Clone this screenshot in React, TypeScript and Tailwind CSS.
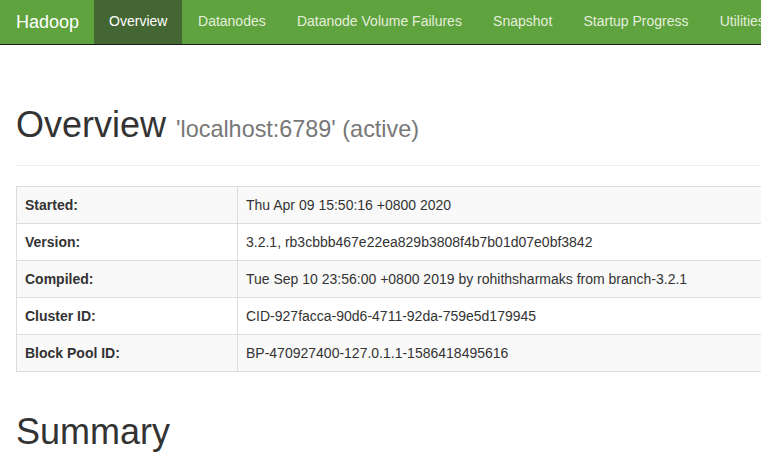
import React from "react";

const navItems = [
  "Overview",
  "Datanodes",
  "Datanode Volume Failures",
  "Snapshot",
  "Startup Progress",
  "Utilities",
];

const rows: [string, string][] = [
  ["Started:", "Thu Apr 09 15:50:16 +0800 2020"],
  ["Version:", "3.2.1, rb3cbbb467e22ea829b3808f4b7b01d07e0bf3842"],
  ["Compiled:", "Tue Sep 10 23:56:00 +0800 2019 by rohithsharmaks from branch-3.2.1"],
  ["Cluster ID:", "CID-927facca-90d6-4711-92da-759e5d179945"],
  ["Block Pool ID:", "BP-470927400-127.0.1.1-1586418495616"],
];

export default function App() {
  return (
    <div
      className="w-[761px] h-[453px] overflow-hidden bg-white text-[#333] text-[14px] leading-[20px]"
      style={{ fontFamily: '"Liberation Sans", Arial, Helvetica, sans-serif' }}
    >
      <nav className="h-[45px] bg-[#5fa33e] border-b border-[#1a1a1a] flex items-stretch whitespace-nowrap w-[1200px]">
        <div className="pl-[16px] pr-[15px] pb-[1px] flex items-center text-[18px] text-white">
          Hadoop
        </div>
        {navItems.map((item, i) => (
          <div
            key={item}
            className={
              i === 0
                ? "px-[15px] pb-[2px] flex items-center bg-[#446633] text-white"
                : "px-[15.6px] pb-[2px] flex items-center text-[#e4eedc]"
            }
          >
            {item}
          </div>
        ))}
      </nav>

      <div className="pl-[16px] w-[1200px]">
        <div className="mt-[60px] pb-[10px] border-b border-[#eee]">
          <h1 className="text-[36px] leading-[39.6px] mb-[10px] font-normal whitespace-nowrap">
            Overview{" "}
            <span className="text-[23.4px] leading-none text-[#777]">'localhost:6789' (active)</span>
          </h1>
        </div>

        <table className="mt-[20px] w-[1140px] border-collapse border border-[#ddd]">
          <tbody>
            {rows.map(([k, v], i) => (
              <tr key={k} className={i % 2 === 0 ? "bg-[#f9f9f9]" : "bg-white"}>
                <th className="w-[221px] border border-[#ddd] p-[8px] text-left font-bold align-top">
                  {k}
                </th>
                <td className="border border-[#ddd] p-[8px] align-top whitespace-nowrap">{v}</td>
              </tr>
            ))}
          </tbody>
        </table>

        <h1 className="mt-[40px] text-[36px] leading-[39.6px] font-normal">Summary</h1>
      </div>
    </div>
  );
}
